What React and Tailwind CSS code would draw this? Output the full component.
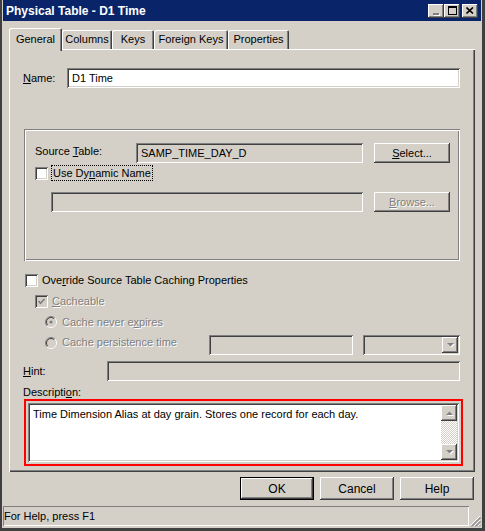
const raised =
  "shadow-[inset_-1px_-1px_#404040,inset_1px_1px_#ffffff,inset_-2px_-2px_#808080,inset_2px_2px_#d4d0c8]";
const sunken =
  "shadow-[inset_1px_1px_#808080,inset_-1px_-1px_#ffffff,inset_2px_2px_#404040,inset_-2px_-2px_#d4d0c8]";
const etched =
  "shadow-[inset_1px_1px_#808080,inset_-1px_-1px_#ffffff,inset_2px_2px_#ffffff,inset_-2px_-2px_#808080]";
const disabledText = "text-[#808080] [text-shadow:1px_1px_0_#ffffff]";

function Checkbox({ checked = false, disabled = false }) {
  return (
    <span
      className={`relative inline-flex h-[13px] w-[13px] shrink-0 ${sunken} ${
        disabled ? "bg-[#d4d0c8]" : "bg-white"
      }`}
    >
      {checked && (
        <svg width="13" height="13" viewBox="0 0 13 13" className="absolute inset-0">
          <polyline
            points="3.5,6 5.5,8.3 9.5,4"
            fill="none"
            stroke={disabled ? "#808080" : "#000"}
            strokeWidth="1.7"
          />
        </svg>
      )}
    </span>
  );
}

function Radio({ checked = false }) {
  return (
    <svg width="12" height="12" viewBox="0 0 12 12" className="shrink-0">
      <circle cx="6" cy="6" r="5.5" fill="#d4d0c8" />
      <path d="M9.9 2.1 A5.5 5.5 0 0 0 2.1 9.9" stroke="#808080" fill="none" />
      <path d="M2.1 9.9 A5.5 5.5 0 0 0 9.9 2.1" stroke="#ffffff" fill="none" />
      <path d="M9.2 2.8 A4.5 4.5 0 0 0 2.8 9.2" stroke="#404040" fill="none" />
      <path d="M2.8 9.2 A4.5 4.5 0 0 0 9.2 2.8" stroke="#d4d0c8" fill="none" />
      {checked && <circle cx="6" cy="6" r="1.6" fill="#808080" />}
    </svg>
  );
}

function Arrow({ up = false, disabled = true }) {
  const fill = disabled ? "#808080" : "#000";
  return (
    <svg width="7" height="4" viewBox="0 0 7 4" className="overflow-visible">
      {disabled && (
        <polygon
          points={up ? "1,5 4.5,1.5 8,5" : "1,1 8,1 4.5,4.5"}
          fill="#ffffff"
        />
      )}
      <polygon points={up ? "0,4 3.5,0.5 7,4" : "0,0 7,0 3.5,3.5"} fill={fill} />
    </svg>
  );
}

function Button({ children, className = "", disabled = false, isDefault = false }) {
  return (
    <div
      className={`flex items-center justify-center ${
        isDefault
          ? "shadow-[inset_0_0_0_1px_#000000,inset_-2px_-2px_#404040,inset_2px_2px_#ffffff,inset_-3px_-3px_#808080]"
          : raised
      } ${disabled ? disabledText : "text-black"} ${className}`}
    >
      {children}
    </div>
  );
}

function Field({ children, className = "", white = false }) {
  return (
    <div
      className={`flex items-center px-[5px] ${sunken} ${white ? "bg-white" : "bg-[#d4d0c8]"} ${className}`}
    >
      {children}
    </div>
  );
}

function TitleButton({ children }) {
  return (
    <div className={`flex h-[14px] w-[16px] items-center justify-center bg-[#d4d0c8] ${raised}`}>
      {children}
    </div>
  );
}

export default function App() {
  const tabs = [
    { label: "Columns", w: "w-[50px]" },
    { label: "Keys", w: "w-[42px]" },
    { label: "Foreign Keys", w: "w-[74px]" },
    { label: "Properties", w: "w-[61px]" },
  ];

  return (
    <div className="flex h-[531px] w-[485px] flex-col bg-[#d4d0c8] pb-[3px] pl-[3px] pr-[4px] font-['Liberation_Sans',Arial,sans-serif] text-[11px] leading-none text-black shadow-[inset_2px_0_#404040,inset_-3px_-3px_#404040]">
      {/* title bar */}
      <div className="flex h-[21px] items-center justify-between bg-[#0a246a] pl-[3px] pr-[3px]">
        <span className="text-[12px] font-bold text-white">Physical Table - D1 Time</span>
        <div className="flex items-center">
          <TitleButton>
            <span className="mt-[7px] h-[2px] w-[6px] bg-[#808080] shadow-[1px_1px_#ffffff]" />
          </TitleButton>
          <TitleButton>
            <span className="h-[9px] w-[9px] border border-t-2 border-black" />
          </TitleButton>
          <div className="w-[2px]" />
          <TitleButton>
            <svg width="8" height="7" viewBox="0 0 8 7">
              <path d="M0.5 0.5 L7 6.5 M7 0.5 L0.5 6.5" stroke="#000" strokeWidth="1.6" />
            </svg>
          </TitleButton>
        </div>
      </div>

      {/* tabs */}
      <div className="ml-[6px] mt-[7px] flex h-[21px] items-end">
        <div className="relative z-10 -mb-[2px] flex h-[23px] w-[53px] items-start justify-center rounded-t-[2px] bg-[#d4d0c8] pt-[6px] shadow-[inset_1px_1px_#ffffff,inset_-1px_0_#404040,inset_-2px_0_#808080]">
          General
        </div>
        {tabs.map((t) => (
          <div
            key={t.label}
            className={`flex h-[19px] items-center justify-center rounded-t-[2px] pb-px ${t.w} shadow-[inset_1px_1px_#ffffff,inset_-1px_0_#404040,inset_-2px_0_#808080]`}
          >
            {t.label}
          </div>
        ))}
      </div>

      {/* panel */}
      <div className="ml-[6px] flex h-[423px] w-[466px] flex-col pl-[14px] pr-[15px] shadow-[inset_1px_1px_#ffffff,inset_-1px_-1px_#404040,inset_-2px_-2px_#808080]">
        <div className="mt-[19px] flex h-[20px] items-center">
          <span className="w-[44px]">
            <u>N</u>ame:
          </span>
          <Field white className="h-[20px] flex-1">
            D1 Time
          </Field>
        </div>

        {/* group box */}
        <div className={`ml-px mt-[41px] flex h-[132px] flex-col pl-[11px] ${etched}`}>
          <div className="mt-[14px] flex h-[20px] items-center">
            <span className="w-[101px] -mt-[4px]">
              Source <u>T</u>able:
            </span>
            <Field className="h-[20px] w-[227px]">SAMP_TIME_DAY_D</Field>
            <Button className="ml-[11px] h-[20px] w-[76px]">
              <span>
                <u>S</u>elect...
              </span>
            </Button>
          </div>
          <div className="mt-[2px] flex h-[16px] items-center">
            <Checkbox />
            <span className="ml-[3px] flex h-[16px] items-center border border-dotted border-black px-px">
              Use Dy<u>n</u>amic Name
            </span>
          </div>
          <div className="ml-[16px] mt-[11px] flex h-[20px] items-center">
            <Field className="h-[20px] w-[312px]" />
            <Button disabled className="ml-[11px] h-[20px] w-[76px]">
              <span>
                <u>B</u>rowse...
              </span>
            </Button>
          </div>
        </div>

        <div className="ml-[2px] mt-[11px] flex h-[16px] items-center gap-[4px]">
          <Checkbox />
          <span>
            Ove<u>r</u>ride Source Table Caching Properties
          </span>
        </div>
        <div className="ml-[12px] mt-[5px] flex h-[16px] items-center gap-[4px]">
          <Checkbox checked disabled />
          <span className={disabledText}>
            <u>C</u>acheable
          </span>
        </div>
        <div className="ml-[22px] mt-[5px] flex h-[16px] items-center gap-[5px]">
          <Radio checked />
          <span className={disabledText}>
            Cache never e<u>x</u>pires
          </span>
        </div>
        <div className="mt-[5px] flex h-[20px] items-center">
          <div className="mb-[5px] ml-[22px] flex w-[164px] items-center gap-[5px]">
            <Radio />
            <span className={disabledText}>Cache persistence time</span>
          </div>
          <Field className="h-[20px] w-[144px]" />
          <div className={`ml-[10px] flex h-[20px] flex-1 items-center justify-end bg-[#d4d0c8] p-[2px] ${sunken}`}>
            <div className={`flex h-[16px] w-[16px] items-center justify-center ${raised}`}>
              <Arrow />
            </div>
          </div>
        </div>

        <div className="mt-[6px] flex h-[20px] items-center">
          <span className="w-[84px]">
            <u>H</u>int:
          </span>
          <Field className="h-[20px] flex-1" />
        </div>

        <div className="mt-[5px] flex h-[13px] items-center">
          Descripti<u>o</u>n:
        </div>

        <div className="-mr-[3px] ml-px h-[67px] border-2 border-[#ff0000] p-[2px]">
          <div className={`flex h-full bg-white p-[2px] ${sunken}`}>
            <div className="flex-1 pl-[3px] pt-[3px] leading-[13px]">
              Time Dimension Alias at day grain. Stores one record for each day.
            </div>
            <div className="flex w-[16px] flex-col bg-[repeating-conic-gradient(#d4d0c8_0_25%,#ffffff_0_50%)] bg-[length:2px_2px]">
              <div className={`flex h-[16px] items-center justify-center bg-[#d4d0c8] ${raised}`}>
                <Arrow up />
              </div>
              <div className="flex-1" />
              <div className={`flex h-[16px] items-center justify-center bg-[#d4d0c8] ${raised}`}>
                <Arrow />
              </div>
            </div>
          </div>
        </div>
      </div>

      {/* buttons */}
      <div className="mr-[7px] mt-[5px] flex h-[23px] justify-end gap-[6px] text-[12px]">
        <Button isDefault className="w-[74px]">OK</Button>
        <Button className="w-[74px]">Cancel</Button>
        <Button className="w-[74px]">Help</Button>
      </div>

      {/* status bar */}
      <div className="mt-[6px] flex h-[20px] items-end">
        <div className="flex h-[20px] flex-1 items-center pl-px shadow-[inset_1px_1px_#808080,inset_-1px_-1px_#ffffff]">
          For Help, press F1
        </div>
        <svg width="12" height="12" viewBox="0 0 12 12" className="mb-[-1px] shrink-0">
          <path d="M11 1 L1 11 M11 5 L5 11 M11 9 L9 11" stroke="#ffffff" />
          <path d="M11.5 2 L2 11.5 M11.5 3 L3 11.5 M11.5 6 L6 11.5 M11.5 7 L7 11.5 M11.5 10 L10 11.5" stroke="#808080" />
        </svg>
      </div>
    </div>
  );
}
